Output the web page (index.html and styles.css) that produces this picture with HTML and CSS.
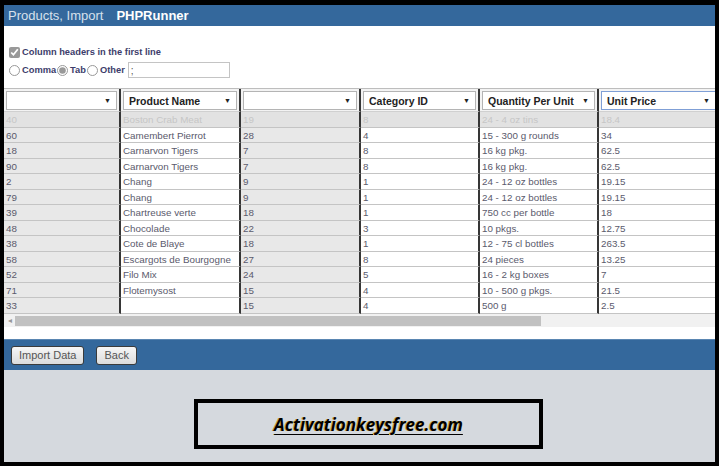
FILE: index.html
```html
<!DOCTYPE html>
<html>
<head>
    <title>Products, Import</title>
    <link rel="stylesheet" href="styles.css">
</head>
<body>
    <div class="frame">
        <div class="topbar">
            <span class="page-title">Products, Import</span>
            <span class="brand">PHPRunner</span>
        </div>

        <div class="options">
            <label class="opt-line"><input type="checkbox" checked> Column headers in the first line</label>
            <div class="opt-line">
                <label><input type="radio" name="sep"> Comma</label>
                <label><input type="radio" name="sep" checked> Tab</label>
                <label><input type="radio" name="sep"> Other</label>
                <input type="text" class="other-box" value=";">
            </div>
        </div>

        <div class="grid-wrap">
            <table class="grid">
                <colgroup>
                    <col style="width:117px"><col style="width:120px"><col style="width:120px">
                    <col style="width:119px"><col style="width:119px"><col style="width:121px">
                </colgroup>
                <thead>
                    <tr>
                        <th><div class="pick"><span></span><span class="arrow">▼</span></div></th>
                        <th><div class="pick"><span>Product Name</span><span class="arrow">▼</span></div></th>
                        <th><div class="pick"><span></span><span class="arrow">▼</span></div></th>
                        <th><div class="pick"><span>Category ID</span><span class="arrow">▼</span></div></th>
                        <th><div class="pick"><span>Quantity Per Unit</span><span class="arrow">▼</span></div></th>
                        <th><div class="pick focus"><span>Unit Price</span><span class="arrow">▼</span></div></th>
                    </tr>
                </thead>
                <tbody>
                    <tr class="skip"><td>40</td><td>Boston Crab Meat</td><td>19</td><td>8</td><td>24 - 4 oz tins</td><td>18.4</td></tr>
                    <tr><td>60</td><td>Camembert Pierrot</td><td>28</td><td>4</td><td>15 - 300 g rounds</td><td>34</td></tr>
                    <tr><td>18</td><td>Carnarvon Tigers</td><td>7</td><td>8</td><td>16 kg pkg.</td><td>62.5</td></tr>
                    <tr><td>90</td><td>Carnarvon Tigers</td><td>7</td><td>8</td><td>16 kg pkg.</td><td>62.5</td></tr>
                    <tr><td>2</td><td>Chang</td><td>9</td><td>1</td><td>24 - 12 oz bottles</td><td>19.15</td></tr>
                    <tr><td>79</td><td>Chang</td><td>9</td><td>1</td><td>24 - 12 oz bottles</td><td>19.15</td></tr>
                    <tr><td>39</td><td>Chartreuse verte</td><td>18</td><td>1</td><td>750 cc per bottle</td><td>18</td></tr>
                    <tr><td>48</td><td>Chocolade</td><td>22</td><td>3</td><td>10 pkgs.</td><td>12.75</td></tr>
                    <tr><td>38</td><td>Cote de Blaye</td><td>18</td><td>1</td><td>12 - 75 cl bottles</td><td>263.5</td></tr>
                    <tr><td>58</td><td>Escargots de Bourgogne</td><td>27</td><td>8</td><td>24 pieces</td><td>13.25</td></tr>
                    <tr><td>52</td><td>Filo Mix</td><td>24</td><td>5</td><td>16 - 2 kg boxes</td><td>7</td></tr>
                    <tr><td>71</td><td>Flotemysost</td><td>15</td><td>4</td><td>10 - 500 g pkgs.</td><td>21.5</td></tr>
                    <tr><td>33</td><td></td><td>15</td><td>4</td><td>500 g</td><td>2.5</td></tr>
                </tbody>
            </table>
        </div>
        <div class="hscroll">
            <span class="scroll-arrow">◂</span>
            <div class="scroll-thumb"></div>
        </div>
        <div class="spacer"></div>

        <div class="actions">
            <button class="btn">Import Data</button>
            <button class="btn">Back</button>
        </div>

        <div class="footer">
            <div class="watermark"><span>Activationkeysfree.com</span></div>
        </div>
    </div>
</body>
</html>
```

FILE: styles.css
```css
body {
    margin: 0;
    background: #000;
    font-family: "Liberation Sans", Arial, sans-serif;
}

.frame {
    margin: 5px 4px 0 4px;
    height: 457px;
    background: #fff;
    display: flex;
    flex-direction: column;
    overflow: hidden;
}

.topbar {
    height: 21px;
    flex-shrink: 0;
    background: #34689c;
    display: flex;
    align-items: center;
    padding-left: 4px;
    gap: 13px;
}

.page-title {
    color: #d7e1ec;
    font-size: 13px;
}

.brand {
    color: #fff;
    font-size: 13px;
    font-weight: bold;
}

.options {
    height: 63px;
    flex-shrink: 0;
    padding: 18px 0 0 5px;
    box-sizing: border-box;
    border-bottom: 1px solid #bdbdbd;
    color: #3d3d6b;
    font-size: 9.3px;
    font-weight: bold;
}

.opt-line {
    display: flex;
    align-items: center;
    height: 16px;
    margin-bottom: 2px;
}

.opt-line label {
    display: flex;
    align-items: center;
    margin-right: 1px;
}

.opt-line input[type=checkbox],
.opt-line input[type=radio] {
    width: 11px;
    height: 11px;
    margin: 0 2px 0 0;
    accent-color: #777;
    filter: grayscale(1) opacity(0.75);
}

.other-box {
    width: 102px;
    height: 16px;
    box-sizing: border-box;
    border: 1px solid #c4c4c4;
    margin-left: 2px;
    padding: 0 2px;
    font-size: 10px;
    color: #555;
}

.grid-wrap {
    overflow: hidden;
    height: 225px;
    flex-shrink: 0;
}

.grid {
    table-layout: fixed;
    border-collapse: separate;
    border-spacing: 0;
    width: 716px;
    font-size: 9.8px;
}

.grid th {
    background: #f3f3f3;
    padding: 2px 2px 1px 2px;
    height: 19px;
    border-right: 2px solid #363636;
    border-bottom: 1px solid #d0d0d0;
}

.pick {
    display: flex;
    justify-content: space-between;
    align-items: center;
    height: 19px;
    box-sizing: border-box;
    border: 1px solid #b4b4b4;
    background: #fff;
    padding: 0 5px 0 5px;
    font-size: 10.5px;
    font-weight: bold;
    color: #222;
    white-space: nowrap;
}

.pick.focus {
    border-color: #7f9fd6;
}

.arrow {
    font-size: 7px;
    color: #222;
}

.grid td {
    height: 15px;
    padding: 0 0 0 2px;
    border-right: 2px solid #363636;
    border-bottom: 1px solid #c4c4c4;
    color: #5a5a6c;
    white-space: nowrap;
    overflow: hidden;
    background: #fff;
}

.grid tbody tr:nth-child(even) td {
    height: 14px;
}

.grid td:nth-child(1),
.grid td:nth-child(3) {
    background: #e8e8e8;
}

.grid tr.skip td {
    background: #e2e2e2;
    color: #c6c6c6;
}

.hscroll {
    height: 13px;
    flex-shrink: 0;
    background: #f1f1f1;
    display: flex;
    align-items: center;
}

.scroll-arrow {
    width: 11px;
    font-size: 8px;
    color: #999;
    text-align: center;
}

.scroll-thumb {
    width: 526px;
    height: 10px;
    background: #c1c1c1;
}

.spacer {
    height: 12px;
    flex-shrink: 0;
}

.actions {
    height: 30px;
    flex-shrink: 0;
    background: #34689c;
    border-top: 1px solid #5a86b2;
    display: flex;
    align-items: center;
    padding-left: 7px;
    gap: 12px;
}

.btn {
    height: 19px;
    padding: 0 7px;
    border: 1px solid #3b3b3b;
    border-radius: 3px;
    background: linear-gradient(#f6f6f6, #dcdcdc);
    color: #555;
    font-family: "Liberation Sans", Arial, sans-serif;
    font-size: 11px;
}

.footer {
    flex: 1;
    background: #d5d9de;
    padding-top: 29px;
}

.watermark {
    width: 341px;
    height: 42px;
    margin-left: 190px;
    border: 4px solid #000;
    display: flex;
    align-items: center;
    justify-content: center;
}

.watermark span {
    font-family: "Open Sans", sans-serif;
    font-size: 17px;
    font-weight: bold;
    font-style: italic;
    color: #000;
    text-decoration: underline;
    text-decoration-thickness: 1px;
    text-underline-offset: 3px;
    text-shadow: -1px 0 0 #c9a640;
}
```
